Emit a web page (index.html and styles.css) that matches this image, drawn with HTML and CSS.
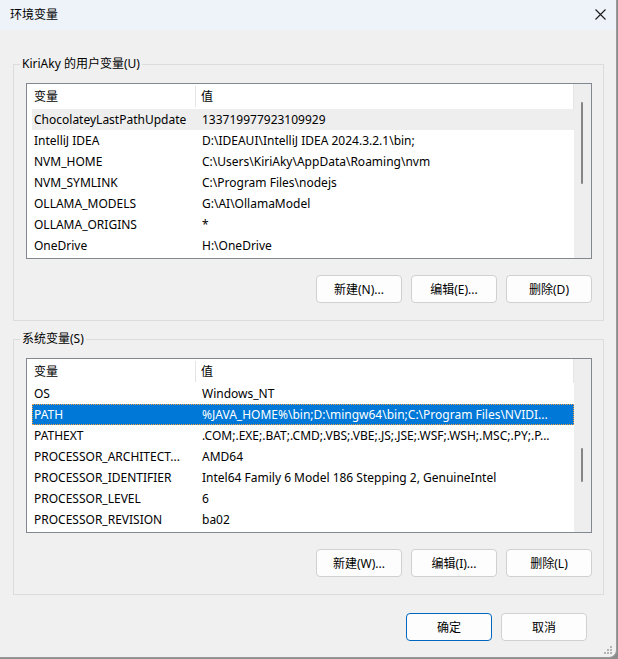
FILE: index.html
```html
<!DOCTYPE html>
<html lang="zh-CN">

<head>
    <meta charset="UTF-8">
    <title>环境变量</title>
    <link rel="stylesheet" href="styles.css">
</head>

<body>

    <div class="window">
        <div class="titlebar">
            <span class="title">环境变量</span>
            <span class="close">
                <svg width="11" height="11" viewBox="0 0 11 11">
                    <path d="M0.5 0.5 L10.5 10.5 M10.5 0.5 L0.5 10.5" stroke="#1a1a1a" stroke-width="1.1" fill="none" />
                </svg>
            </span>
        </div>

        <div class="content">
            <!-- User variables -->
            <fieldset class="group">
                <legend>KiriAky 的用户变量(U)</legend>
                <div class="listview user-list">
                    <div class="list-main">
                        <div class="list-header">
                            <div class="col-head first">变量</div>
                            <div class="col-head">值</div>
                        </div>
                        <div class="row hover"><span>ChocolateyLastPathUpdate</span><span>133719977923109929</span></div>
                        <div class="row"><span>IntelliJ IDEA</span><span>D:\IDEAUI\IntelliJ IDEA 2024.3.2.1\bin;</span></div>
                        <div class="row"><span>NVM_HOME</span><span>C:\Users\KiriAky\AppData\Roaming\nvm</span></div>
                        <div class="row"><span>NVM_SYMLINK</span><span>C:\Program Files\nodejs</span></div>
                        <div class="row"><span>OLLAMA_MODELS</span><span>G:\AI\OllamaModel</span></div>
                        <div class="row"><span>OLLAMA_ORIGINS</span><span>*</span></div>
                        <div class="row"><span>OneDrive</span><span>H:\OneDrive</span></div>
                    </div>
                    <div class="scrollbar">
                        <div class="thumb"></div>
                    </div>
                </div>
                <div class="group-buttons">
                    <button class="btn">新建(N)...</button>
                    <button class="btn">编辑(E)...</button>
                    <button class="btn">删除(D)</button>
                </div>
            </fieldset>

            <!-- System variables -->
            <fieldset class="group system">
                <legend>系统变量(S)</legend>
                <div class="listview system-list">
                    <div class="list-main">
                        <div class="list-header">
                            <div class="col-head first">变量</div>
                            <div class="col-head">值</div>
                        </div>
                        <div class="row"><span>OS</span><span>Windows_NT</span></div>
                        <div class="row selected"><span>PATH</span><span>%JAVA_HOME%\bin;D:\mingw64\bin;C:\Program Files\NVIDI...</span></div>
                        <div class="row"><span>PATHEXT</span><span>.COM;.EXE;.BAT;.CMD;.VBS;.VBE;.JS;.JSE;.WSF;.WSH;.MSC;.PY;.P...</span></div>
                        <div class="row"><span>PROCESSOR_ARCHITECT...</span><span>AMD64</span></div>
                        <div class="row"><span>PROCESSOR_IDENTIFIER</span><span>Intel64 Family 6 Model 186 Stepping 2, GenuineIntel</span></div>
                        <div class="row"><span>PROCESSOR_LEVEL</span><span>6</span></div>
                        <div class="row"><span>PROCESSOR_REVISION</span><span>ba02</span></div>
                    </div>
                    <div class="scrollbar">
                        <div class="thumb"></div>
                    </div>
                </div>
                <div class="group-buttons">
                    <button class="btn">新建(W)...</button>
                    <button class="btn">编辑(I)...</button>
                    <button class="btn">删除(L)</button>
                </div>
            </fieldset>

            <div class="dialog-buttons">
                <button class="btn default">确定</button>
                <button class="btn">取消</button>
            </div>
        </div>

        <svg class="grip" width="8" height="8" viewBox="0 0 8 8">
            <rect x="6" y="0" width="2" height="2" fill="#b4b4b4" />
            <rect x="3" y="3" width="2" height="2" fill="#b4b4b4" />
            <rect x="6" y="3" width="2" height="2" fill="#b4b4b4" />
            <rect x="0" y="6" width="2" height="2" fill="#b4b4b4" />
            <rect x="3" y="6" width="2" height="2" fill="#b4b4b4" />
            <rect x="6" y="6" width="2" height="2" fill="#b4b4b4" />
        </svg>
    </div>

</body>

</html>
```

FILE: styles.css
```css
body {
    margin: 0;
    background-color: #8c8c8c;
    font-family: "Noto Sans", "Noto Sans CJK SC", sans-serif;
    font-size: 12px;
    color: #000;
}

.window {
    position: relative;
    box-sizing: border-box;
    width: 617px;
    height: 658px;
    background-color: #f0f0f0;
    border-right: 1px solid #9a9a9a;
    border-bottom: 1px solid #9a9a9a;
    border-bottom-right-radius: 8px;
    overflow: hidden;
}

/* Title bar */
.titlebar {
    height: 30px;
    display: flex;
    align-items: center;
    padding-left: 10px;
    background-color: #eef3f9;
}

.title {
    margin-top: -2px;
}

.close {
    margin-left: auto;
    margin-right: 10px;
    margin-top: -2px;
    display: flex;
}

/* Content */
.content {
    padding: 26px 12px 0 13px;
}

.group {
    margin: 0;
    padding: 11px 11px 17px 12px;
    border: 1px solid #dcdcdc;
    min-width: 0;
}

.group legend {
    padding: 0 2px;
    margin-left: -6px;
    line-height: 16px;
}

.group.system {
    margin-top: 10px;
}

/* List view */
.listview {
    display: flex;
    border: 1px solid #828790;
    height: 176px;
    box-sizing: border-box;
}

.system-list {
    height: 175px;
}

.list-main {
    flex: 1;
    background-color: #fff;
    overflow: hidden;
}

.list-header {
    display: grid;
    grid-template-columns: 169px 1fr;
    height: 25px;
    align-items: center;
    border-right: 1px solid #e5e5e5;
}

.system-list .list-header {
    height: 24px;
}

.col-head {
    padding-left: 5px;
    line-height: 21px;
}

.col-head.first {
    padding-left: 7px;
    border-right: 1px solid #e5e5e5;
}

.row {
    display: grid;
    grid-template-columns: 168px 1fr;
    height: 21px;
    line-height: 21px;
    margin-left: 5px;
    white-space: nowrap;
}

.row span {
    padding: 0 2px;
    overflow: hidden;
}

.row.hover {
    background-color: #eeeeee;
}

.row.selected {
    background-color: #0078d7;
    color: #fff;
    outline: 1px dotted #f0a040;
    outline-offset: -1px;
}

.scrollbar {
    width: 17px;
    background-color: #eeeeee;
}

.thumb {
    width: 2px;
    margin-left: 7px;
    margin-top: 18px;
    height: 82px;
    background-color: #858585;
    border-radius: 1px;
}

.system-list .thumb {
    margin-top: 89px;
    height: 34px;
}

/* Buttons */
.group-buttons {
    display: flex;
    justify-content: flex-end;
    gap: 9px;
    margin-top: 16px;
}

.btn {
    width: 86px;
    height: 28px;
    padding: 0;
    border: 1px solid #d0d0d0;
    border-radius: 4px;
    background-color: #fdfdfd;
    font-family: inherit;
    font-size: 12px;
    color: #000;
}

.dialog-buttons {
    display: flex;
    justify-content: flex-end;
    gap: 9px;
    margin-top: 18px;
    margin-right: 17px;
}

.btn.default {
    border-color: #0067c0;
}

.grip {
    position: absolute;
    right: 4px;
    bottom: 3px;
}
```
